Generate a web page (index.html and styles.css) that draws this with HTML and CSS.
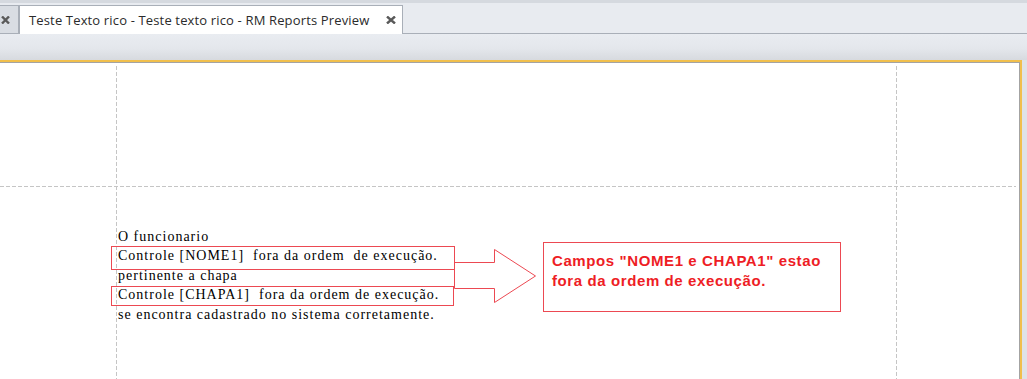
FILE: index.html
```html
<!DOCTYPE html>
<html lang="pt">
<head>
<meta charset="utf-8">
<title>RM Reports Preview</title>
<link rel="stylesheet" href="styles.css">
</head>
<body>
<div class="tabstrip">
  <div class="tab-stub">
    <svg class="close" width="9" height="8" viewBox="0 0 9 8"><path d="M1 0.5 L8 7.5 M8 0.5 L1 7.5"/></svg>
  </div>
  <div class="tab">
    <span class="tab-title">Teste Texto rico - Teste texto rico - RM Reports Preview</span>
    <svg class="close" width="10" height="8" viewBox="0 0 10 8"><path d="M1 0.5 L9 7.5 M9 0.5 L1 7.5"/></svg>
  </div>
</div>
<div class="toolbar"></div>
<div class="frame">
  <div class="page">
    <div class="band">
      <div class="rich-text">
        <div class="line">O funcionario</div>
        <div class="line">Controle [NOME1]&nbsp; fora da ordem&nbsp; de execução.</div>
        <div class="line">pertinente a chapa</div>
        <div class="line">Controle [CHAPA1]&nbsp; fora da ordem de execução.</div>
        <div class="line">se encontra cadastrado no sistema corretamente.</div>
      </div>
      <div class="callout">Campos "NOME1 e CHAPA1" estao<br>fora da ordem de execução.</div>
      <svg class="marks" width="430" height="130" viewBox="0 0 430 130">
        <rect x="-4.5" y="60.5" width="343" height="23"/>
        <rect x="-4.5" y="100.5" width="342" height="19"/>
        <polygon points="338.5,76.5 378.5,76.5 378.5,63.5 419.5,90 378.5,116.5 378.5,102.5 338.5,102.5"/>
      </svg>
    </div>
  </div>
</div>
</body>
</html>
```
FILE: styles.css
```css
html, body {
  margin: 0;
  padding: 0;
}
body {
  width: 1027px;
  height: 379px;
  overflow: hidden;
  background: #dfe2e7;
  font-family: "Open Sans", "Liberation Sans", sans-serif;
}
.tabstrip {
  box-sizing: border-box;
  height: 34px;
  background: #e8ebf0;
  border-top: 3px solid #d5d9df;
  border-bottom: 1px solid #a9afb8;
  display: flex;
  align-items: flex-end;
}
.tab-stub {
  box-sizing: border-box;
  width: 19px;
  height: 28px;
  background: #d9dde3;
  border-top: 1px solid #a9afb8;
  border-right: 1px solid #a9afb8;
  display: flex;
  align-items: center;
  padding-left: 1px;
}
.tab {
  box-sizing: border-box;
  width: 384px;
  height: 29px;
  margin-bottom: -1px;
  background: #ffffff;
  border: 1px solid #a9afb8;
  border-bottom: none;
  display: flex;
  align-items: center;
  padding-left: 9px;
  padding-right: 6px;
  justify-content: space-between;
}
.tab-title {
  font-size: 13px;
  color: #2b2b2b;
  letter-spacing: 0.15px;
}
.close path {
  stroke: #5a5a5a;
  stroke-width: 2.4;
  fill: none;
}
.toolbar {
  height: 26px;
  background: linear-gradient(#e9ecf1, #e4e7ec 55%, #d7dadf);
}
.frame {
  width: 1022px;
  box-sizing: border-box;
  border-top: 2px solid #f1bf4c;
  border-right: 2px solid #f1bf4c;
}
.page {
  height: 320px;
  box-sizing: border-box;
  background-color: #ffffff;
  border-top: 1px solid #a3a3a3;
  border-right: 1px solid #a3a3a3;
  background-image:
    repeating-linear-gradient(to bottom, #c5c5c5 0 4px, transparent 4px 6px),
    repeating-linear-gradient(to bottom, #c5c5c5 0 4px, transparent 4px 6px),
    repeating-linear-gradient(to right, #c5c5c5 0 4px, transparent 4px 6px);
  background-size: 1px 100%, 1px 100%, 1016px 1px;
  background-position: 116px 3px, 896px 3px, 0 123px;
  background-repeat: no-repeat;
  display: grid;
  grid-template-columns: 116px 780px 1fr;
  grid-template-rows: 123px 1fr;
}
.band {
  grid-column: 2 / 4;
  grid-row: 2;
  position: relative;
  display: flex;
  align-items: flex-start;
  padding: 41px 0 0 2px;
}
.rich-text {
  flex: 0 0 425px;
  font-family: "Liberation Serif", "Times New Roman", serif;
  font-size: 14px;
  letter-spacing: 1px;
  line-height: 19.4px;
  color: #000;
  white-space: nowrap;
}
.callout {
  box-sizing: border-box;
  width: 298px;
  height: 70px;
  margin-top: 15px;
  border: 1px solid #ec4952;
  padding: 8px 0 0 8px;
  color: #ee1d25;
  font-family: "Liberation Sans", Arial, sans-serif;
  font-weight: bold;
  font-size: 15px;
  letter-spacing: 0.6px;
  line-height: 20px;
  white-space: nowrap;
}
.marks {
  position: absolute;
  left: 0;
  top: 0;
  overflow: visible;
  pointer-events: none;
}
.marks rect, .marks polygon {
  fill: none;
  stroke: #ec4952;
  stroke-width: 1;
}
```
